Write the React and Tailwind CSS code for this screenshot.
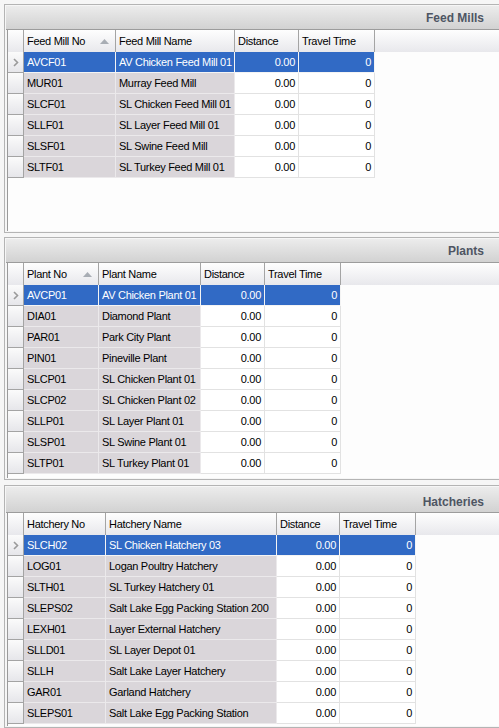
import React from 'react';

const feedMills = {
  title: 'Feed Mills',
  box: 'h-[229px] mt-[4px]',
  bar: 'h-[24px]',
  sorted: true,
  cols: [
    { label: 'Feed Mill No', w: 'w-[92px]', key: true },
    { label: 'Feed Mill Name', w: 'w-[119px]', key: true },
    { label: 'Distance', w: 'w-[64px]' },
    { label: 'Travel Time', w: 'w-[76px]' },
  ],
  rows: [
    ['AVCF01', 'AV Chicken Feed Mill 01'],
    ['MUR01', 'Murray Feed Mill'],
    ['SLCF01', 'SL Chicken Feed Mill 01'],
    ['SLLF01', 'SL Layer Feed Mill 01'],
    ['SLSF01', 'SL Swine Feed Mill'],
    ['SLTF01', 'SL Turkey Feed Mill 01'],
  ],
};

const plants = {
  title: 'Plants',
  box: 'h-[243px] mt-[4px]',
  bar: 'h-[24px]',
  sorted: true,
  cols: [
    { label: 'Plant No', w: 'w-[75px]', key: true },
    { label: 'Plant Name', w: 'w-[102px]', key: true },
    { label: 'Distance', w: 'w-[64px]' },
    { label: 'Travel Time', w: 'w-[76px]' },
  ],
  rows: [
    ['AVCP01', 'AV Chicken Plant 01'],
    ['DIA01', 'Diamond Plant'],
    ['PAR01', 'Park City Plant'],
    ['PIN01', 'Pineville Plant'],
    ['SLCP01', 'SL Chicken Plant 01'],
    ['SLCP02', 'SL Chicken Plant 02'],
    ['SLLP01', 'SL Layer Plant 01'],
    ['SLSP01', 'SL Swine Plant 01'],
    ['SLTP01', 'SL Turkey Plant 01'],
  ],
};

const hatcheries = {
  title: 'Hatcheries',
  box: 'h-[243px] mt-[5px]',
  bar: 'h-[26px] pt-[4px]',
  sorted: false,
  cols: [
    { label: 'Hatchery No', w: 'w-[82px]', key: true },
    { label: 'Hatchery Name', w: 'w-[171px]', key: true },
    { label: 'Distance', w: 'w-[63px]' },
    { label: 'Travel Time', w: 'w-[76px]' },
  ],
  rows: [
    ['SLCH02', 'SL Chicken Hatchery 03'],
    ['LOG01', 'Logan Poultry Hatchery'],
    ['SLTH01', 'SL Turkey Hatchery 01'],
    ['SLEPS02', 'Salt Lake Egg Packing Station 200'],
    ['LEXH01', 'Layer External Hatchery'],
    ['SLLD01', 'SL Layer Depot 01'],
    ['SLLH', 'Salt Lake Layer Hatchery'],
    ['GAR01', 'Garland Hatchery'],
    ['SLEPS01', 'Salt Lake Egg Packing Station'],
  ],
};

function HeaderRow({ cols, sorted }) {
  return (
    <div className="flex h-[22px] shrink-0 bg-gradient-to-b from-[#fefefe] to-[#e8e8ec]">
      <div className="w-[16px] shrink-0 border-r border-[#a4a4a4]" />
      {cols.map((c, i) => (
        <div
          key={c.label}
          className={`${c.w} shrink-0 border-r border-[#a4a4a4] pl-[3px] pr-[6px] flex items-center justify-between whitespace-nowrap overflow-hidden`}
        >
          <span>{c.label}</span>
          {i === 0 && sorted && (
            <svg width="9" height="5" viewBox="0 0 9 5">
              <path d="M0 5 L4.5 0 L9 5 Z" fill="#a8adb4" />
            </svg>
          )}
        </div>
      ))}
      <div className="flex-1" />
    </div>
  );
}

function DataRow({ cols, row, selected }) {
  return (
    <div className="flex h-[21px] shrink-0">
      <div className="w-[16px] shrink-0 border-r border-b border-[#a4a4a4] bg-gradient-to-b from-[#fbfbfb] to-[#e6e6ea] flex items-center justify-center">
        {selected && (
          <svg width="6" height="9" viewBox="0 0 6 9">
            <path d="M1 1 L4.5 4.5 L1 8" stroke="#9a9a9a" strokeWidth="1.6" fill="none" />
          </svg>
        )}
      </div>
      {cols.map((c, i) => {
        const text = c.key ? row[i] : i === 2 ? '0.00' : '0';
        const bg = selected
          ? 'bg-[#316ac5] text-white border-[#f4f4f4]'
          : c.key
          ? 'bg-[#dad6da] text-black border-[#ebe9eb]'
          : 'bg-white text-black border-[#e2e2e2]';
        return (
          <div
            key={c.label}
            className={`${c.w} ${bg} shrink-0 border-r border-b flex items-center whitespace-nowrap overflow-hidden ${
              c.key ? 'pl-[3px]' : 'justify-end pr-[3px]'
            }`}
          >
            {text}
          </div>
        );
      })}
    </div>
  );
}

function Panel({ p }) {
  return (
    <div className={`${p.box} shrink-0 flex flex-col border-l border-t border-b border-[#b4b4b4] p-px pr-0`}>
      <div
        className={`${p.bar} shrink-0 flex items-center justify-end pr-[15px] bg-gradient-to-b from-[#ececec] to-[#d2d2d2] border-b border-[#9c9c9c]`}
      >
        <span className="font-bold text-[12px] tracking-normal text-[#4e5563]">{p.title}</span>
      </div>
      <div className="flex-1 flex flex-col ml-px border-l border-[#9a9a9a] bg-[#fdfdfd] overflow-hidden">
        <HeaderRow cols={p.cols} sorted={p.sorted} />
        {p.rows.map((r, i) => (
          <DataRow key={r[0]} cols={p.cols} row={r} selected={i === 0} />
        ))}
      </div>
    </div>
  );
}

export default function App() {
  return (
    <div
      className="w-[499px] h-[728px] overflow-hidden bg-[#f6f6f6] pl-[4px] flex flex-col text-[11px] tracking-[-0.3px] text-black"
      style={{ fontFamily: '"Liberation Sans", Arial, sans-serif' }}
    >
      <Panel p={feedMills} />
      <Panel p={plants} />
      <Panel p={hatcheries} />
    </div>
  );
}
